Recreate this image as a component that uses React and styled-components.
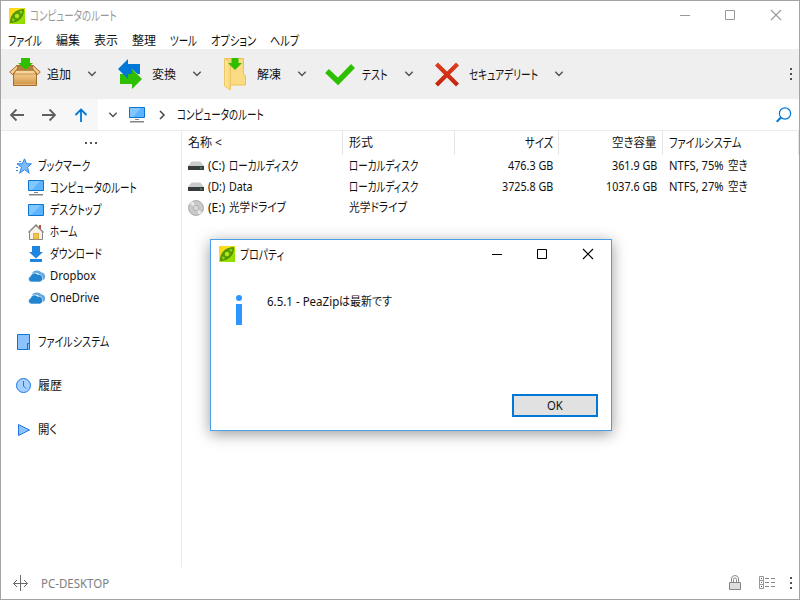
import { useLayoutEffect, useRef, useState } from "react";
import styled, { createGlobalStyle } from "styled-components";

const menus = [
  ["ファイル", 34],
  ["編集", 24],
  ["表示", 24],
  ["整理", 24],
  ["ツール", 27],
  ["オプション", 45],
  ["ヘルプ", 29],
];

const tools = [
  { text: "追加", width: 24, Icon: BoxIcon },
  { text: "変換", width: 24, Icon: ConvertIcon },
  { text: "解凍", width: 24, Icon: FolderIcon },
  { text: "テスト", width: 26, Icon: CheckIcon },
  { text: "セキュアデリート", width: 69, Icon: CrossIcon },
];

const bookmarks = [
  { text: "ブックマーク", width: 52, Icon: StarIcon },
  { text: "コンピュータのルート", width: 87, Icon: MonitorIcon, nested: true },
  { text: "デスクトップ", width: 52, Icon: DesktopIcon, nested: true },
  { text: "ホーム", width: 27, Icon: HomeIcon, nested: true },
  { text: "ダウンロード", width: 52, Icon: DownloadIcon, nested: true },
  { text: "Dropbox", width: 46, Icon: CloudIcon, nested: true },
  { text: "OneDrive", width: 49, Icon: CloudIcon, nested: true },
  { text: "ファイルシステム", width: 71, Icon: DriveIcon, space: true },
  { text: "履歴", width: 24, Icon: ClockIcon, space: true },
  { text: "開く", width: 19, Icon: PlayIcon, space: true },
];

const drives = [
  {
    Icon: DiskIcon,
    letter: "(C:)",
    name: ["ローカルディスク", 69],
    type: ["ローカルディスク", 69],
    size: ["476.3 GB", 45],
    free: ["361.9 GB", 45],
    percent: "NTFS, 75%",
  },
  {
    Icon: DiskIcon,
    letter: "(D:)",
    name: ["Data", 24],
    type: ["ローカルディスク", 69],
    size: ["3725.8 GB", 51],
    free: ["1037.6 GB", 51],
    percent: "NTFS, 27%",
  },
  {
    Icon: DiscIcon,
    letter: "(E:)",
    name: ["光学ドライブ", 57],
    type: ["光学ドライブ", 58],
  },
];

export default function App() {
  return (
    <>
      <GlobalStyle />
      <Window>
        <TitleBar>
          <PeaIcon />
          <Title>
            <Label width={87}>コンピュータのルート</Label>
          </Title>
          <WindowButtons color="#999" />
        </TitleBar>

        <MenuBar>
          {menus.map(([text, width]) => (
            <Label key={text} width={width}>
              {text}
            </Label>
          ))}
        </MenuBar>

        <Toolbar>
          {tools.map(({ text, width, Icon }) => (
            <Tool key={text}>
              <ToolIcon>
                <Icon />
              </ToolIcon>
              <Label width={width}>{text}</Label>
              <Chevron />
            </Tool>
          ))}
          <More />
        </Toolbar>

        <AddressBar>
          <History>
            <ArrowIcon />
            <ArrowIcon flip />
            <UpIcon />
          </History>
          <Path>
            <Chevron />
            <MonitorIcon />
            <svg width="6" height="10" viewBox="0 0 6 10">
              <path d="M1 1l4 4-4 4" fill="none" stroke="#444" strokeWidth="1.5" />
            </svg>
            <Label width={87}>コンピュータのルート</Label>
          </Path>
          <SearchIcon />
        </AddressBar>

        <Main>
          <Sidebar>
            <Dots>
              <i />
              <i />
              <i />
            </Dots>
            {bookmarks.map(({ text, width, Icon, nested, space }) => (
              <Bookmark key={text} $nested={nested} $space={space}>
                <Icon />
                <Label width={width}>{text}</Label>
              </Bookmark>
            ))}
          </Sidebar>

          <Table>
            <HeadRow>
              <Cell>
                <Label width={34}>名称 &lt;</Label>
              </Cell>
              <Cell>
                <Label width={24}>形式</Label>
              </Cell>
              <Cell $right>
                <Label width={28}>サイズ</Label>
              </Cell>
              <Cell $right>
                <Label width={45}>空き容量</Label>
              </Cell>
              <Cell>
                <Label width={72}>ファイルシステム</Label>
              </Cell>
            </HeadRow>
            {drives.map(({ Icon, letter, name, type, size, free, percent }) => (
              <Row key={letter}>
                <Cell>
                  <Icon />
                  <Label width={17}>{letter}</Label>
                  <Label width={name[1]}>{name[0]}</Label>
                </Cell>
                <Cell>
                  <Label width={type[1]}>{type[0]}</Label>
                </Cell>
                <Cell $right>{size && <Label width={size[1]}>{size[0]}</Label>}</Cell>
                <Cell $right>{free && <Label width={free[1]}>{free[0]}</Label>}</Cell>
                <Cell>
                  {percent && (
                    <>
                      <Label width={55}>{percent}</Label>
                      <Label width={20}>空き</Label>
                    </>
                  )}
                </Cell>
              </Row>
            ))}
          </Table>
        </Main>

        <StatusBar>
          <SplitIcon />
          <Label width={68}>PC-DESKTOP</Label>
          <StatusIcons>
            <LockIcon />
            <ListIcon />
            <More />
          </StatusIcons>
        </StatusBar>

        <Dialog>
          <DialogTitle>
            <PeaIcon />
            <Label width={44}>プロパティ</Label>
            <WindowButtons color="#000" />
          </DialogTitle>
          <Message>
            <InfoIcon />
            <Label width={72}>6.5.1 - PeaZip</Label>
            <Label width={53}>は最新です</Label>
          </Message>
          <OkButton>
            <Label width={16}>OK</Label>
          </OkButton>
        </Dialog>
      </Window>
    </>
  );
}

// squeezes the text to the given width, like the narrow kana of a UI font
function Label({ width, children }) {
  const ref = useRef(null);
  const [scale, setScale] = useState(1);
  const kana = /^[\u3040-\u30ff]+$/.test(children);

  useLayoutEffect(() => {
    setScale(width / ref.current.offsetWidth);
  }, [width]);

  return (
    <LabelBox $kana={kana} style={{ width }}>
      <span ref={ref} style={{ transform: `scaleX(${scale})` }}>
        {children}
      </span>
    </LabelBox>
  );
}

function WindowButtons({ color }) {
  return (
    <Buttons>
      <svg width="11" height="11" viewBox="0 0 11 11">
        <path d="M0 5.5h10" stroke={color} />
      </svg>
      <svg width="11" height="11" viewBox="0 0 11 11">
        <path d="M.5.5h9v9h-9z" fill="none" stroke={color} />
      </svg>
      <svg width="11" height="11" viewBox="0 0 11 11">
        <path d="M0 0l10 10M10 0L0 10" stroke={color} strokeWidth="1.1" />
      </svg>
    </Buttons>
  );
}

function Chevron() {
  return (
    <svg width="10" height="8" viewBox="0 0 10 8">
      <path d="M1.3 1.8L5 5.5l3.7-3.7" fill="none" stroke="#505050" strokeWidth="1.4" />
    </svg>
  );
}

function More() {
  return (
    <svg width="2" height="12" viewBox="0 0 2 12">
      <path d="M0 0h2v2H0zM0 5h2v2H0zM0 10h2v2H0z" fill="#505050" />
    </svg>
  );
}

function PeaIcon() {
  return (
    <svg width="16" height="16" viewBox="0 0 16 16">
      <defs>
        <linearGradient id="pea" x1="0" y1="0" x2="1" y2="1">
          <stop offset="0" stopColor="#ffd21c" />
          <stop offset=".4" stopColor="#f5e418" />
          <stop offset=".6" stopColor="#a4e000" />
          <stop offset="1" stopColor="#86dc00" />
        </linearGradient>
      </defs>
      <path d="M0 0h16v16H0z" fill="url(#pea)" />
      <path d="M1.5 14.5C1.5 7.5 5.5 2 14.5 1.5 14.5 8.5 10.5 14 1.5 14.5z" fill="#549c00" stroke="#3f7f00" strokeWidth=".8" />
      <circle cx="8" cy="8" r="2.2" fill="#b4e51e" />
      <circle cx="12" cy="4.2" r="1.4" fill="#8fce0c" />
      <circle cx="4.2" cy="12" r="1.4" fill="#8fce0c" />
    </svg>
  );
}

function BoxIcon() {
  return (
    <svg width="32" height="32" viewBox="0 0 32 32">
      <defs>
        <linearGradient id="box" x1="0" y1="0" x2="0" y2="1">
          <stop offset="0" stopColor="#f3cd8b" />
          <stop offset="1" stopColor="#cf9145" />
        </linearGradient>
      </defs>
      <path d="M8 7.5h16l4 9H4z" fill="#b57f3e" stroke="#a56b29" />
      <path d="M4.5 15.5h23v12h-23z" fill="url(#box)" stroke="#a56b29" />
      <path d="M8 7.5L.7 14l2.8 2.5L9 10zM24 7.5l7.3 6.5-2.8 2.5L23 10z" fill="#f3cf93" stroke="#a56b29" strokeLinejoin="round" />
      <path d="M7 12.5h18l2 3.5H5z" fill="#f5d59c" stroke="#b57a36" strokeWidth=".7" />
      <path d="M5.5 26.5h21" stroke="#eab872" />
      <path d="M12 0h9v5h3l-7.5 7L9 5h3z" fill="#2dbf00" />
    </svg>
  );
}

function ConvertIcon() {
  return (
    <svg width="24" height="30" viewBox="0 0 24 30">
      <path d="M2 15h12v-5l10 10-10 10v-5H2z" fill="#2dbf00" />
      <path d="M0 10L10 0v5h12v10h-2.5L14 10v5h-4v5z" fill="#0078d7" />
    </svg>
  );
}

function FolderIcon() {
  return (
    <svg width="22" height="34" viewBox="0 0 22 34">
      <defs>
        <linearGradient id="folder" x1="0" y1="0" x2="1" y2="0">
          <stop offset="0" stopColor="#ffe9a3" />
          <stop offset="1" stopColor="#f8d376" />
        </linearGradient>
      </defs>
      <path d="M1 1.5h18.5V17l2 1.5V28H6z" fill="#fbdb84" stroke="#efbf4f" />
      <path d="M.5 1.5l6 3.5v28L.5 29z" fill="url(#folder)" stroke="#f0c65f" />
      <path d="M7.500 1h7v5H18l-7 7-7-7h3.500z" fill="#2dbf00" />
    </svg>
  );
}

function CheckIcon() {
  return (
    <svg width="30" height="22" viewBox="0 0 30 22">
      <path d="M2 8l11 10.5L28 3" fill="none" stroke="#2dbf00" strokeWidth="5.4" />
    </svg>
  );
}

function CrossIcon() {
  return (
    <svg width="26" height="26" viewBox="0 0 26 26">
      <defs>
        <linearGradient id="cross" x1="0" y1="0" x2="0" y2="26" gradientUnits="userSpaceOnUse">
          <stop offset="0" stopColor="#e2401e" />
          <stop offset="1" stopColor="#c3220c" />
        </linearGradient>
      </defs>
      <path d="M2.5 3l21 21M23.5 3l-21 21" stroke="url(#cross)" strokeWidth="4.2" />
    </svg>
  );
}

function ArrowIcon({ flip }) {
  return (
    <svg width="14" height="14" viewBox="0 0 14 14">
      <path
        d={flip ? "M0 7h13M7.5 1.5L13 7l-5.5 5.5" : "M14 7H1M6.5 1.5L1 7l5.5 5.5"}
        fill="none"
        stroke="#606060"
        strokeWidth="1.8"
      />
    </svg>
  );
}

function UpIcon() {
  return (
    <svg width="14" height="14" viewBox="0 0 14 14">
      <path d="M7 14V1.5M1.5 7L7 1.5 12.5 7" fill="none" stroke="#0078d7" strokeWidth="1.8" />
    </svg>
  );
}

function SearchIcon() {
  return (
    <svg width="16" height="16" viewBox="0 0 16 16">
      <circle cx="9" cy="6.5" r="5.6" fill="none" stroke="#0078d7" strokeWidth="1.2" />
      <path d="M5 10.5L.7 14.8" stroke="#0078d7" strokeWidth="2" />
    </svg>
  );
}

function MonitorIcon() {
  return (
    <svg width="16" height="16" viewBox="0 0 16 16">
      <path d="M.5.5h15v10H.5z" fill="#5cb4ff" stroke="#0a74d0" />
      <path d="M1 1h11L4 10H1z" fill="#83c7ff" />
      <path d="M6 12h4v1H6zM1 14h14v1.5H1z" fill="#858585" />
    </svg>
  );
}

function DesktopIcon() {
  return (
    <svg width="16" height="16" viewBox="0 0 16 16">
      <path d="M.5 2.5h15v11H.5z" fill="#5cb4ff" stroke="#0a74d0" />
      <path d="M1 3h12L3 13H1z" fill="#83c7ff" />
    </svg>
  );
}

function StarIcon() {
  return (
    <svg width="16" height="16" viewBox="0 0 16 16">
      <path
        d="M8.5.8l2 5h5l-4 3.4 1.7 6-4.7-3.5-4.8 3.5 1.8-6L1 5.8h5.3z"
        fill="#7cbcff"
        stroke="#2f86e4"
      />
      <path d="M0 9.5h2M0 12.5h2M3 3.5h2" stroke="#2f86e4" />
    </svg>
  );
}

function HomeIcon() {
  return (
    <svg width="16" height="16" viewBox="0 0 16 16">
      <path d="M11 1h2v5h-2z" fill="#c84b3a" />
      <path d="M1.5 7.5L8 1.5l6.5 6v8h-13z" fill="#f9f2e8" stroke="#858585" />
      <path d="M.5 8.5L8 1l7.5 7.5" fill="none" stroke="#858585" strokeWidth="1.3" />
      <path d="M5.5 9.5h5V15h-5z" fill="#f0c44d" stroke="#e0ac35" />
    </svg>
  );
}

function DownloadIcon() {
  return (
    <svg width="16" height="16" viewBox="0 0 16 16">
      <path d="M4 0h8v6h3l-7 6.5L1 6h3zM2 13h12v3H2z" fill="#1e86e0" />
    </svg>
  );
}

function CloudIcon() {
  return (
    <svg width="16" height="16" viewBox="0 0 16 16">
      <path d="M4 5a5.5 4.5 0 0 1 9.500-.5A4 4 0 0 1 15 12h-3L10 5z" fill="#63a5dd" />
      <path
        d="M3 14a3 3 0 0 1-.5-5.800A4.300 4.300 0 0 1 10 6.500a3.700 3.700 0 0 1 1.500 7.500z"
        fill="#2285cf"
        stroke="#fff"
        strokeWidth=".6"
      />
    </svg>
  );
}

function DriveIcon() {
  return (
    <svg width="16" height="16" viewBox="0 0 16 16">
      <path d="M1.5.5h12v15h-12z" fill="#8cc3ff" stroke="#0a74d0" />
      <path d="M11.5 15.5v-6h2v6" fill="#8cc3ff" stroke="#0a74d0" />
    </svg>
  );
}

function ClockIcon() {
  return (
    <svg width="16" height="16" viewBox="0 0 16 16">
      <circle cx="7.5" cy="7.5" r="7" fill="#a5d0ff" stroke="#1f79dd" />
      <path d="M7.5 3v5l2.5 2.5" fill="none" stroke="#1f79dd" />
    </svg>
  );
}

function PlayIcon() {
  return (
    <svg width="16" height="16" viewBox="0 0 16 16">
      <path d="M2.5 2.5l11 5.5-11 5.5z" fill="#8cc3ff" stroke="#1f79dd" />
    </svg>
  );
}

function DiskIcon() {
  return (
    <svg width="16" height="16" viewBox="0 0 16 16">
      <path d="M3.5 3.5h9L16 8H0z" fill="#c9cccd" />
      <path d="M0 8h16v3.5a.5.5 0 0 1-.5.5H.5a.5.5 0 0 1-.5-.5z" fill="#383b3d" />
      <path d="M12 9.5h2v1h-2z" fill="#35d04b" />
    </svg>
  );
}

function DiscIcon() {
  return (
    <svg width="16" height="16" viewBox="0 0 16 16">
      <circle cx="8" cy="8" r="7.5" fill="#c9c9c9" stroke="#a0a0a0" strokeWidth=".8" />
      <path d="M8 8L2 3.5a7 7 0 0 1 3-2zM8 8l6 4.500a7 7 0 0 1-3 2z" fill="#e9e9e9" />
      <circle cx="8" cy="8" r="2.8" fill="#e2e2e2" stroke="#a6a6a6" strokeWidth=".8" />
      <circle cx="8" cy="8" r="1.1" fill="#fff" stroke="#aaa" strokeWidth=".5" />
    </svg>
  );
}

function SplitIcon() {
  return (
    <svg width="16" height="16" viewBox="0 0 16 16">
      <path d="M7.5 0v16M.5 8.5h14M4 5L.5 8.5 4 12M11 5l3.5 3.5L11 12" fill="none" stroke="#6a6a6a" />
    </svg>
  );
}

function LockIcon() {
  return (
    <svg width="12" height="16" viewBox="0 0 12 16">
      <path d="M2.5 8V4a3.5 3.5 0 0 1 7 0v4M4.5 8V4.5a1.5 1.5 0 0 1 3 0V8" fill="none" stroke="#8a8a8a" />
      <path d="M.5 7.500h11v7H.5z" fill="#dedede" stroke="#858585" />
    </svg>
  );
}

function ListIcon() {
  return (
    <svg width="17" height="14" viewBox="0 0 17 14">
      <path d="M.5.5h4v12h-4zM.5 4.5h4M.5 8.5h4" fill="#fff" stroke="#999" />
      <path d="M6 2.5h4M12 2.5h4M6 6.5h4M12 6.5h4M6 10.5h4M12 10.5h4" stroke="#888" />
      <path d="M2 2h1v1H2z" fill="#c22" />
      <path d="M2 6h1v1H2z" fill="#2a5" />
      <path d="M2 10h1v1H2z" fill="#33b" />
    </svg>
  );
}

function InfoIcon() {
  return (
    <svg width="6" height="30" viewBox="0 0 6 30">
      <circle cx="3" cy="3" r="3" fill="#2e97ff" />
      <path d="M0 9h6v21H0z" fill="#2e97ff" />
    </svg>
  );
}

const GlobalStyle = createGlobalStyle`
  * {
    box-sizing: border-box;
  }

  body {
    margin: 0;
    overflow: hidden;
    background: #fff;
  }

  svg {
    display: block;
    flex-shrink: 0;
    overflow: visible;
  }
`;

const Window = styled.div`
  position: relative;
  width: 800px;
  height: 600px;
  border: 1px solid #a3a3a3;
  display: flex;
  flex-direction: column;
  background: #fff;
  color: #111;
  font-family: "Noto Sans", "Noto Sans CJK JP", sans-serif;
  font-size: 12px;
  line-height: 16px;
`;

const LabelBox = styled.span`
  display: block;
  flex-shrink: 0;
  height: 16px;
  white-space: nowrap;
  font-size: ${(props) => (props.$kana ? 13 : 12)}px;

  span {
    display: inline-block;
    transform-origin: 0 0;
    font-feature-settings: "palt";
    line-height: ${(props) => (props.$kana ? 14 : 16)}px;
    vertical-align: top;
  }
`;

const TitleBar = styled.header`
  height: 29px;
  padding-left: 8px;
  display: flex;
  align-items: center;
`;

const Title = styled.div`
  margin-left: 5px;
  color: #999;
`;

const Buttons = styled.div`
  display: flex;
  gap: 34px;
  margin-left: auto;
  padding-right: 18px;

  svg:last-child {
    margin-left: 1px;
    margin-right: -1px;
  }
`;

const MenuBar = styled.nav`
  height: 19px;
  padding-left: 7px;
  padding-top: 3px;
  display: flex;
  align-items: center;
  gap: 14px;
`;

const Toolbar = styled.div`
  height: 50px;
  padding: 0 7px 0 4px;
  display: flex;
  align-items: center;
  background: #efefef;

  > svg {
    margin-left: auto;
  }
`;

const Tool = styled.div`
  display: flex;
  align-items: center;
  padding-right: 13px;

  > span {
    margin-top: 2px;
  }

  > svg {
    margin-left: 16px;
  }
`;

const ToolIcon = styled.div`
  width: 40px;
  margin-right: 2px;
  display: flex;
  justify-content: center;
`;

const AddressBar = styled.div`
  height: 32px;
  padding-right: 7px;
  display: flex;
  align-items: center;
  border-bottom: 1px solid #ebebeb;
`;

const History = styled.div`
  width: 97px;
  height: 31px;
  padding-left: 9px;
  display: flex;
  align-items: center;
  gap: 18px;
  background: #f7f7f7;
`;

const Path = styled.div`
  flex: 1;
  display: flex;
  align-items: center;
  padding-left: 10px;

  > span {
    margin-top: 1px;
  }

  svg:nth-child(2) {
    margin: 0 14px 0 11px;
  }

  svg:nth-child(3) {
    margin-right: 12px;
  }
`;

const Main = styled.main`
  height: 436px;
  display: flex;
`;

const Sidebar = styled.aside`
  width: 181px;
  border-right: 1px solid #ebebeb;
`;

const Dots = styled.div`
  height: 24px;
  display: flex;
  justify-content: center;
  align-items: center;
  gap: 3px;

  i {
    width: 2px;
    height: 2px;
    background: #555;
  }
`;

const Bookmark = styled.div`
  height: 22px;
  margin-top: ${(props) => (props.$space ? 22 : 0)}px;
  padding-left: ${(props) => (props.$nested ? 27 : 15)}px;
  display: flex;
  align-items: center;
  gap: 6px;
`;

const Table = styled.section`
  flex: 1;
`;

const Row = styled.div`
  height: 21px;
  display: grid;
  grid-template-columns: 161px 112px 104px 104px 136px;
`;

const HeadRow = styled(Row)`
  height: 24px;

  > div {
    border-right: 1px solid #e5e5e5;
  }
`;

const Cell = styled.div`
  display: flex;
  align-items: center;
  justify-content: ${(props) => (props.$right ? "flex-end" : "flex-start")};
  gap: 4px;
  padding: ${(props) => (props.$right ? "0 5px 0 0" : "0 0 0 6px")};
  border-right: 1px solid transparent;
`;

const StatusBar = styled.footer`
  height: 31px;
  padding: 0 7px 0 12px;
  display: flex;
  align-items: center;
  gap: 12px;
  color: #808080;

  > span {
    margin-top: 2px;
  }
`;

const StatusIcons = styled.div`
  display: flex;
  align-items: center;
  gap: 14px;
  margin-left: auto;

  svg:first-child {
    margin-right: 4px;
  }
`;

const Dialog = styled.div`
  position: absolute;
  left: 209px;
  top: 238px;
  width: 402px;
  height: 192px;
  border: 1px solid #4c9fea;
  display: flex;
  flex-direction: column;
  background: #fff;
  box-shadow: 0 3px 14px rgba(0, 0, 0, 0.4);
`;

const DialogTitle = styled.div`
  height: 28px;
  padding-left: 8px;
  display: flex;
  align-items: center;
  gap: 5px;

  > span {
    margin-top: 2px;
  }
`;

const Message = styled.div`
  height: 60px;
  margin-top: 27px;
  padding-left: 25px;
  display: flex;

  svg {
    margin-right: 25px;
  }

  > span {
    margin-top: -1px;
  }
`;

const OkButton = styled.button`
  width: 86px;
  height: 23px;
  margin: 39px 13px 0 auto;
  padding: 0;
  display: flex;
  align-items: center;
  justify-content: center;
  border: 2px solid #0078d7;
  background: #e1e1e1;
  color: #111;
  font: inherit;
`;
